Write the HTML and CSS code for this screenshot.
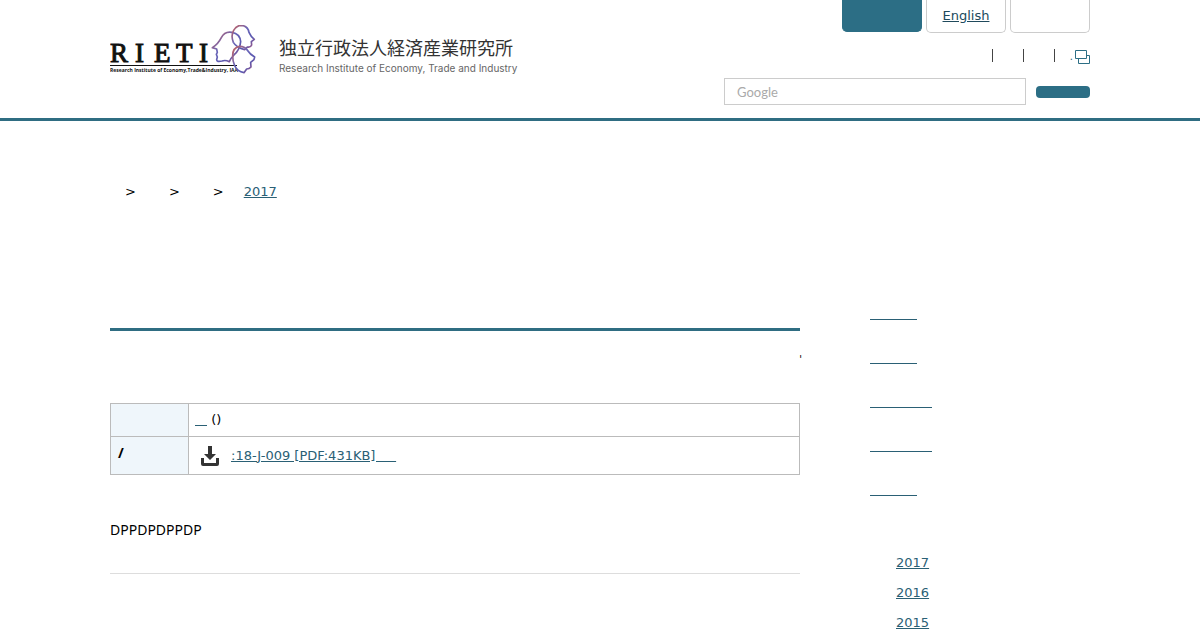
FILE: index.html
```html
<!DOCTYPE html>
<html lang="ja">

<head>
    <meta charset="UTF-8">
    <meta name="viewport" content="width=device-width, initial-scale=1.0">
    <title>RIETI</title>
    <link rel="stylesheet" href="styles.css">
</head>

<body>

    <header class="site-header">
        <div class="wrap header-inner">
            <a class="logo" href="#">
                <svg class="logo-mark" width="147" height="50" viewBox="0 0 147 50">
                    <g class="logo-letters">
                        <text x="0" y="37">R</text>
                        <text x="25" y="37">I</text>
                        <text x="44" y="37">E</text>
                        <text x="66" y="37">T</text>
                        <text x="89" y="37">I</text>
                    </g>
                    <path d="M0 40.500H127" stroke="#111" />
                    <text class="logo-small" x="0" y="47">Research Institute of Economy,Trade&amp;Industry, IAA</text>
                    <defs>
                        <linearGradient id="face" x1="0" y1="0" x2="1" y2="1">
                            <stop offset="0" stop-color="#c8605a" />
                            <stop offset="0.4" stop-color="#6a66b8" />
                            <stop offset="0.7" stop-color="#5a58b0" />
                            <stop offset="1" stop-color="#b85a78" />
                        </linearGradient>
                    </defs>
                    <g transform="scale(0.3333) translate(-30 -30)" fill="none" stroke="url(#face)" stroke-width="5" stroke-linejoin="round">
                        <path d="M337 98 Q354 88 364 68 Q374 48 396 52 Q420 56 422 80 Q420 104 402 120 Q392 130 388 140 Q376 134 366 138 Q350 142 350 134 L352 126 L349 118 L352 112 L350 102 Z" />
                        <path d="M400 82 Q392 62 401 46 Q410 31 424 31 Q444 33 447 52 Q452 64 463 73 L454 80 L455 90 Q452 98 442 96 L434 104 Q410 98 400 82 Z" />
                        <path d="M398 122 Q398 98 418 94 Q436 94 444 108 Q450 118 464 126 L462 134 L452 142 L453 156 Q448 162 440 162 L432 173 Q412 170 404 152 Q398 138 398 122 Z" />
                    </g>
                </svg>
                <span class="logo-name">
                    <span class="name-ja">独立行政法人経済産業研究所</span>
                    <span class="name-en">Research Institute of Economy, Trade and Industry</span>
                </span>
            </a>

            <div class="header-tools">
                <ul class="lang-tabs">
                    <li><a class="active" href="#"></a></li>
                    <li><a href="#">English</a></li>
                    <li><a href="#"></a></li>
                </ul>
                <div class="sub-links">
                    <span class="divider"></span>
                    <span class="divider"></span>
                    <span class="divider"></span>
                    <a class="window-link" href="#">
                        <span class="dot">.</span>
                        <svg width="15" height="14" viewBox="0 0 15 14" fill="#fff" stroke="#2c6e85">
                            <path d="M3.500 5.500h11v8h-11z" />
                            <path d="M0.500 0.500h11v8h-11z" />
                        </svg>
                    </a>
                </div>
                <form class="search">
                    <input type="text" placeholder="Google" aria-label="Google">
                    <button type="button" aria-label="Search"></button>
                </form>
            </div>
        </div>
    </header>

    <div class="wrap">
        <nav class="breadcrumb">
            <span>&gt;</span>
            <span>&gt;</span>
            <span>&gt;</span>
            <a href="#">2017</a>
        </nav>

        <div class="columns">
            <main>
                <h1></h1>
                <p class="date">'</p>

                <table class="info">
                    <tr>
                        <th></th>
                        <td><a class="blank tiny" href="#"></a> ()</td>
                    </tr>
                    <tr>
                        <th>/</th>
                        <td>
                            <div class="download">
                                <svg width="18" height="20" viewBox="0 0 18 20" fill="#333">
                                    <path d="M7 0h4v8h4l-6 6-6-6h4z" />
                                    <path d="M0 12h3v5h12v-5h3v6q0 2-2 2H2q-2 0-2-2z" />
                                </svg>
                                <a href="#">:18-J-009 [PDF:431KB]&nbsp;&nbsp;&nbsp;&nbsp;&nbsp;</a>
                            </div>
                        </td>
                    </tr>
                </table>

                <p class="summary">DPPDPDPPDP</p>
            </main>

            <aside>
                <ul class="side-links">
                    <li><a class="blank" href="#"></a></li>
                    <li><a class="blank" href="#"></a></li>
                    <li><a class="blank long" href="#"></a></li>
                    <li><a class="blank long" href="#"></a></li>
                    <li><a class="blank" href="#"></a></li>
                </ul>
                <ul class="years">
                    <li><a href="#">2017</a></li>
                    <li><a href="#">2016</a></li>
                    <li><a href="#">2015</a></li>
                </ul>
            </aside>
        </div>
    </div>

</body>

</html>
```

FILE: styles.css
```css
* {
    box-sizing: border-box;
}

body {
    margin: 0;
    font-family: "DejaVu Sans", sans-serif;
    font-size: 13px;
    line-height: 20px;
    color: #000;
    background-color: #fff;
    overflow-x: hidden;
}

/* no gutter, so the centred column does not shift */
html {
    scrollbar-width: none;
}

ul {
    list-style: none;
    margin: 0;
    padding: 0;
}

a {
    color: #2a6075;
}

.wrap {
    max-width: 980px;
    margin: 0 auto;
}

/* header */
.site-header {
    border-bottom: 3px solid #2f6d82;
}

.header-inner {
    display: flex;
    justify-content: space-between;
    align-items: flex-start;
    padding-bottom: 13px;
}

.logo {
    display: flex;
    gap: 22px;
    padding-top: 25px;
    color: #333;
    text-decoration: none;
}

.logo-letters {
    font-family: "Liberation Serif", serif;
    font-size: 27px;
    fill: #111;
    stroke: #111;
    stroke-width: 1px;
}

.logo-small {
    font-family: "Open Sans", sans-serif;
    font-size: 5px;
    font-weight: bold;
    fill: #111;
}

.logo-name {
    display: flex;
    flex-direction: column;
    padding-top: 10px;
}

.name-ja {
    font-family: "Noto Sans CJK JP", sans-serif;
    font-size: 18px;
    line-height: 24px;
}

.name-en {
    font-family: Inter, sans-serif;
    font-size: 10px;
    line-height: 18px;
    color: #666;
}

.header-tools {
    display: flex;
    flex-direction: column;
    align-items: flex-end;
}

.lang-tabs {
    display: flex;
    gap: 4px;
}

.lang-tabs a {
    display: block;
    width: 80px;
    height: 33px;
    padding-top: 6px;
    border: 1px solid #ccc;
    border-top: none;
    border-radius: 0 0 5px 5px;
    text-align: center;
    color: #204a5c;
}

.lang-tabs .active {
    height: 32px;
    background-color: #2c6e85;
    border-color: #2c6e85;
}

.sub-links {
    display: flex;
    align-items: center;
    gap: 30px;
    height: 45px;
}

.divider {
    width: 1px;
    height: 13px;
    background-color: #444;
}

.window-link {
    display: flex;
    align-items: center;
    gap: 2px;
    margin-left: -15px;
    padding-top: 2px;
    text-decoration: none;
}

.window-link .dot {
    font-size: 10px;
}

.search {
    display: flex;
    align-items: center;
    gap: 10px;
}

.search input {
    width: 302px;
    height: 27px;
    padding: 0 12px;
    border: 1px solid #ccc;
    font-family: Lato, sans-serif;
    font-size: 13px;
}

.search input::placeholder {
    color: #aaa;
}

.search button {
    width: 54px;
    height: 12px;
    border: none;
    border-radius: 4px;
    background-color: #2c6e85;
}

/* breadcrumb */
.breadcrumb {
    display: flex;
    gap: 33px;
    padding: 61px 0 0 15px;
}

.breadcrumb a {
    margin-left: -13px;
}

/* content */
.columns {
    display: flex;
    justify-content: space-between;
}

main {
    width: 690px;
}

h1 {
    height: 129px;
    margin: 0;
    border-bottom: 3px solid #2f6d82;
}

.date {
    margin: 19px -2px 0;
    text-align: right;
    font-size: 10px;
}

.info {
    width: 100%;
    margin-top: 33px;
    border-collapse: collapse;
}

.info th,
.info td {
    height: 33px;
    padding: 6px;
    border: 1px solid #bbb;
    text-align: left;
    vertical-align: top;
}

.info th {
    width: 78px;
    padding-left: 7px;
    background-color: #eff6fb;
    font-family: "Noto Sans", sans-serif;
    font-size: 14px;
}

.download {
    display: flex;
    align-items: center;
    gap: 12px;
    height: 25px;
    padding-left: 6px;
}

.blank {
    display: inline-block;
    width: 47px;
    height: 14px;
    border-bottom: 1px solid #2a6075;
}

.blank.long {
    width: 62px;
}

.blank.tiny {
    width: 12px;
    height: 5px;
    vertical-align: -2px;
}

.summary {
    margin: 45px 0 0;
    padding-bottom: 33px;
    border-bottom: 1px solid #ddd;
    font-family: "Noto Sans", sans-serif;
    font-size: 14px;
}

/* sidebar */
aside {
    width: 220px;
    padding-top: 104px;
}

.side-links li {
    display: flex;
    height: 44px;
}

.years {
    padding: 27px 0 0 26px;
}

.years li {
    margin-bottom: 10px;
}
```
